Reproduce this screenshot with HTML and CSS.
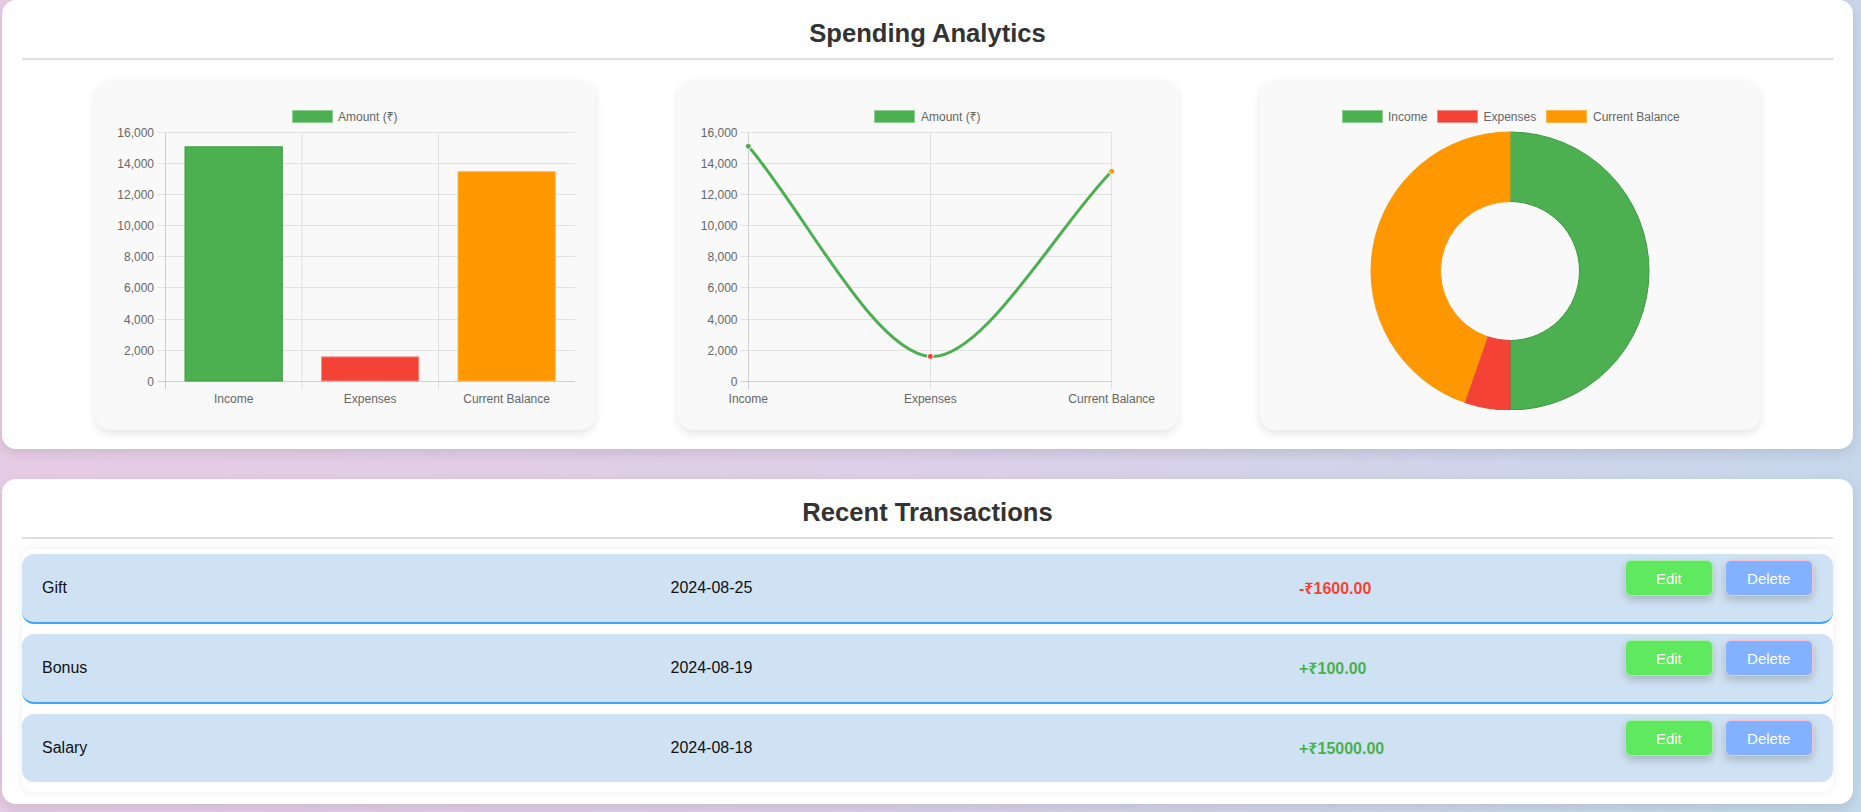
FILE: index.html
```html
<!DOCTYPE html>
<html lang="en">
<head>
<meta charset="utf-8">
<title>Spending Analytics</title>
<link rel="stylesheet" href="styles.css">
</head>
<body>
<div class="page">
  <section class="panel analytics">
    <h2 class="panel-title">Spending Analytics</h2>
    <div class="charts">
      <div class="chart-card">
        <svg class="chart" viewBox="0 0 460 310" width="460" height="310">
          <g class="legend">
            <rect class="lg-green" x="177.5" y="10.5" width="40" height="12"/>
            <text class="tick" x="223" y="20.5">Amount (₹)</text>
          </g>
          <g class="grid">
            <line x1="42.5" y1="32.5" x2="460" y2="32.5"/>
            <line x1="42.5" y1="63.5" x2="460" y2="63.5"/>
            <line x1="42.5" y1="94.5" x2="460" y2="94.5"/>
            <line x1="42.5" y1="125.5" x2="460" y2="125.5"/>
            <line x1="42.5" y1="156.5" x2="460" y2="156.5"/>
            <line x1="42.5" y1="187.5" x2="460" y2="187.5"/>
            <line x1="42.5" y1="219.5" x2="460" y2="219.5"/>
            <line x1="42.5" y1="250.5" x2="460" y2="250.5"/>
            <line x1="187" y1="32.5" x2="187" y2="289.5"/>
            <line x1="323.5" y1="32.5" x2="323.5" y2="289.5"/>
          </g>
          <g class="axis">
            <line x1="42.5" y1="281.5" x2="460" y2="281.5"/>
            <line x1="50.5" y1="32.5" x2="50.5" y2="289.5"/>
          </g>
          <g class="ylabels tick">
            <text x="39" y="36.5">16,000</text>
            <text x="39" y="67.5">14,000</text>
            <text x="39" y="98.5">12,000</text>
            <text x="39" y="129.5">10,000</text>
            <text x="39" y="160.5">8,000</text>
            <text x="39" y="191.5">6,000</text>
            <text x="39" y="223.5">4,000</text>
            <text x="39" y="254.5">2,000</text>
            <text x="39" y="285.5">0</text>
          </g>
          <g class="xlabels tick">
            <text x="118.7" y="302.5">Income</text>
            <text x="255.2" y="302.5">Expenses</text>
            <text x="391.6" y="302.5">Current Balance</text>
          </g>
          <rect class="bar-green" x="70" y="46.8" width="97.3" height="234.2"/>
          <rect class="bar-red" x="206.5" y="256.9" width="97.3" height="24.1"/>
          <rect class="bar-orange" x="343" y="71.7" width="97.3" height="209.3"/>
        </svg>
      </div>

      <div class="chart-card">
        <svg class="chart" viewBox="0 0 460 310" width="460" height="310">
          <g class="legend">
            <rect class="lg-green" x="176.5" y="10.5" width="40" height="12"/>
            <text class="tick" x="223" y="20.5">Amount (₹)</text>
          </g>
          <g class="grid">
            <line x1="42.5" y1="32.5" x2="414" y2="32.5"/>
            <line x1="42.5" y1="63.5" x2="414" y2="63.5"/>
            <line x1="42.5" y1="94.5" x2="414" y2="94.5"/>
            <line x1="42.5" y1="125.5" x2="414" y2="125.5"/>
            <line x1="42.5" y1="156.5" x2="414" y2="156.5"/>
            <line x1="42.5" y1="187.5" x2="414" y2="187.5"/>
            <line x1="42.5" y1="219.5" x2="414" y2="219.5"/>
            <line x1="42.5" y1="250.5" x2="414" y2="250.5"/>
            <line x1="232.5" y1="32.5" x2="232.5" y2="289.5"/>
            <line x1="413.5" y1="32.5" x2="413.5" y2="289.5"/>
          </g>
          <g class="axis">
            <line x1="42.5" y1="281.5" x2="414" y2="281.5"/>
            <line x1="50.5" y1="32.5" x2="50.5" y2="289.5"/>
          </g>
          <g class="ylabels tick">
            <text x="39.5" y="36.5">16,000</text>
            <text x="39.5" y="67.5">14,000</text>
            <text x="39.5" y="98.5">12,000</text>
            <text x="39.5" y="129.5">10,000</text>
            <text x="39.5" y="160.5">8,000</text>
            <text x="39.5" y="191.5">6,000</text>
            <text x="39.5" y="223.5">4,000</text>
            <text x="39.5" y="254.5">2,000</text>
            <text x="39.5" y="285.5">0</text>
          </g>
          <g class="xlabels tick">
            <text x="50.3" y="302.5">Income</text>
            <text x="232.3" y="302.5">Expenses</text>
            <text x="413.7" y="302.5">Current Balance</text>
          </g>
          <path class="line" d="M50.3,46.3 C104.9,109.3 175.9,252.5 232.3,256.4 C284.9,260.0 359.3,126.8 413.7,71.2"/>
          <circle class="pt-green" cx="50.3" cy="46.3" r="3"/>
          <circle class="pt-red" cx="232.3" cy="256.4" r="3"/>
          <circle class="pt-orange" cx="413.7" cy="71.2" r="3"/>
        </svg>
      </div>

      <div class="chart-card">
        <svg class="chart" viewBox="0 0 460 310" width="460" height="310">
          <g class="legend">
            <rect class="lg-green" x="62.5" y="10.5" width="40" height="12"/>
            <text class="tick" x="108" y="20.5">Income</text>
            <rect class="lg-red" x="157.5" y="10.5" width="40" height="12"/>
            <text class="tick" x="203.5" y="20.5">Expenses</text>
            <rect class="lg-orange" x="266.5" y="10.5" width="40" height="12"/>
            <text class="tick" x="313" y="20.5">Current Balance</text>
          </g>
          <path class="seg-green" d="M230,32 A139,139 0 0 1 230,310 L230,240.5 A69.5,69.5 0 0 0 230,101.5 Z"/>
          <path class="seg-red" d="M230,310 A139,139 0 0 1 184.59,302.37 L207.29,236.68 A69.5,69.5 0 0 0 230,240.5 Z"/>
          <path class="seg-orange" d="M184.59,302.37 A139,139 0 0 1 230,32 L230,101.5 A69.5,69.5 0 0 0 207.29,236.68 Z"/>
        </svg>
      </div>
    </div>
  </section>

  <section class="panel transactions">
    <h2 class="panel-title">Recent Transactions</h2>
    <div class="tx-list">
      <div class="tx-row bordered">
        <span class="tx-name">Gift</span>
        <span class="tx-date">2024-08-25</span>
        <span class="tx-amount neg">-₹1600.00</span>
        <div class="tx-actions">
          <button class="btn btn-edit">Edit</button>
          <button class="btn btn-delete">Delete</button>
        </div>
      </div>
      <div class="tx-row bordered">
        <span class="tx-name">Bonus</span>
        <span class="tx-date">2024-08-19</span>
        <span class="tx-amount pos">+₹100.00</span>
        <div class="tx-actions">
          <button class="btn btn-edit">Edit</button>
          <button class="btn btn-delete">Delete</button>
        </div>
      </div>
      <div class="tx-row">
        <span class="tx-name">Salary</span>
        <span class="tx-date">2024-08-18</span>
        <span class="tx-amount pos">+₹15000.00</span>
        <div class="tx-actions">
          <button class="btn btn-edit">Edit</button>
          <button class="btn btn-delete">Delete</button>
        </div>
      </div>
    </div>
  </section>
</div>
</body>
</html>
```

FILE: styles.css
```css
* {
  box-sizing: border-box;
}

html,
body {
  margin: 0;
}

body {
  font-family: "Liberation Sans", Arial, "Noto Sans", sans-serif;
  background: linear-gradient(110deg, #e7cbe3 0%, #dccfe7 50%, #c3d8eb 100%);
  min-height: 812px;
  overflow: hidden;
}

.page {
  display: flex;
  flex-direction: column;
  gap: 30px;
  padding: 0 8px 6px 2px;
}

.panel {
  background: #ffffff;
  border-radius: 14px;
  box-shadow: 0 4px 12px rgba(0, 0, 0, 0.1);
  padding: 19px 20px 9px;
}

.transactions {
  padding-bottom: 12px;
}

.panel-title {
  margin: 0 0 10px;
  padding-bottom: 10px;
  border-bottom: 2px solid #dddddd;
  font-size: 25.6px;
  line-height: normal;
  font-weight: bold;
  color: #333333;
  text-align: center;
}

/* charts */
.charts {
  display: flex;
  justify-content: space-evenly;
}

.chart-card {
  width: 500px;
  margin: 10px;
  padding: 20px;
  background: #f9f9f9;
  border-radius: 15px;
  box-shadow: 0 4px 10px rgba(0, 0, 0, 0.1);
}

.chart {
  display: block;
  width: 460px;
  height: 310px;
}

.tick {
  font-family: "Liberation Sans", Arial, "Noto Sans", sans-serif;
  font-size: 12px;
  fill: #666666;
}

.ylabels text {
  text-anchor: end;
}

.xlabels text {
  text-anchor: middle;
}

.grid line {
  stroke: #e1e1e1;
  stroke-width: 1;
}

.axis line {
  stroke: #cfcfcf;
  stroke-width: 1;
}

.lg-green,
.bar-green,
.seg-green {
  fill: #4caf50;
  stroke: #3d9a41;
  stroke-width: 1;
}

.lg-green {
  stroke: #8fd092;
}

.lg-red,
.bar-red,
.seg-red {
  fill: #f44336;
  stroke: #f28b84;
  stroke-width: 1;
}

.lg-orange,
.bar-orange,
.seg-orange {
  fill: #ff9800;
  stroke: #ffb74d;
  stroke-width: 1;
}

.seg-red {
  stroke: #e0413a;
}

.seg-orange {
  stroke: #f59a10;
}

.line {
  fill: none;
  stroke: #4caf50;
  stroke-width: 3;
}

.pt-green,
.pt-red,
.pt-orange {
  stroke: #ffffff;
  stroke-width: 1;
}

.pt-green {
  fill: #4caf50;
}

.pt-red {
  fill: #f44336;
}

.pt-orange {
  fill: #ff9800;
}

/* transactions */
.tx-list {
  display: flex;
  flex-direction: column;
  gap: 10px;
  padding: 5px 0 10px;
  background: #ffffff;
  border-radius: 10px;
  box-shadow: 0 0 10px rgba(0, 0, 0, 0.08);
}

.tx-row {
  box-sizing: content-box;
  display: grid;
  grid-template-columns: 628.5px 628.5px 1fr auto;
  align-items: center;
  height: 68px;
  padding: 0 20px;
  background: #cfe2f3;
  border-radius: 12px;
  font-size: 16px;
  color: #111111;
}

.tx-row.bordered {
  border-bottom: 2px solid #42a5f5;
}

.tx-amount {
  font-weight: bold;
}

.tx-amount.neg {
  color: #f44336;
}

.tx-amount.pos {
  color: #4caf50;
}

.tx-actions {
  align-self: start;
  margin-top: 6px;
  display: flex;
  gap: 11.4px;
}

.btn {
  width: 88.5px;
  height: 36px;
  border-radius: 6px;
  font-family: "Liberation Sans", Arial, sans-serif;
  font-size: 15px;
  color: #ffffff;
  cursor: pointer;
  box-shadow: 0 4px 8px rgba(0, 0, 0, 0.2);
}

.btn-edit {
  background: #5ee95e;
  border: 1px solid #a8eea8;
}

.btn-delete {
  background: #82b1ff;
  border: 1px solid #f3c4d6;
}
```
